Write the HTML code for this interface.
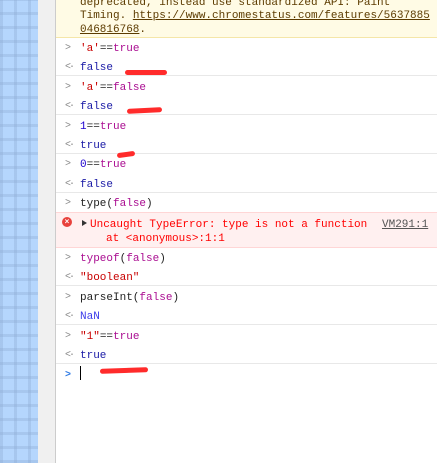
<html><head><style>
body{margin:0;width:437px;height:463px;overflow:hidden;background:#fff;position:relative;font-family:"Liberation Mono",monospace;font-size:11px;color:#222}
.side{position:absolute;left:0;top:0;width:38px;height:463px;background:#b5d6fd;background-image:repeating-linear-gradient(0deg,rgba(140,170,210,.35) 0 3px,transparent 3px 14px),repeating-linear-gradient(90deg,rgba(140,170,210,.35) 0 3px,transparent 3px 14px)}
.gray{position:absolute;left:38px;top:0;width:17px;height:463px;background:#f0f0f0;border-right:1px solid #ccc}
.t{position:absolute;left:80px;white-space:pre;line-height:14px;margin-top:2px}
.p{position:absolute;left:65px;color:#888;font-size:10px;line-height:14px;margin-top:2px;letter-spacing:-2px}
.hr{position:absolute;left:56px;right:0;height:1px;background:#e8e8e8}
.s{color:#c80000}.k{color:#aa0d91}.o{color:#1a1aa6}.n{color:#1c00cf}
.r{position:absolute;background:#ff2b2b;border-radius:3px;height:5px}
</style></head><body>
<div class="side"></div><div class="gray"></div>
<div style="position:absolute;left:56px;top:0;right:0;height:37px;background:#fffbe5;border-bottom:1px solid #f5e6a8"></div>
<div class="t" style="top:-6px;color:#5c3b00">deprecated, instead use standardized API: Paint</div>
<div class="t" style="top:7px;color:#5c3b00">Timing. <u>https://www.chromestatus.com/features/5637885</u></div>
<div class="t" style="top:21px;color:#5c3b00"><u>046816768</u>.</div>

<div class="p" style="top:40px">&gt;</div><div class="t" style="top:40px"><span class="s">'a'</span>==<span class="k">true</span></div>
<div class="p" style="top:59px">&lt;·</div><div class="t o" style="top:59px">false</div>
<div class="hr" style="top:75px"></div>
<div class="p" style="top:79px">&gt;</div><div class="t" style="top:79px"><span class="s">'a'</span>==<span class="k">false</span></div>
<div class="p" style="top:98px">&lt;·</div><div class="t o" style="top:98px">false</div>
<div class="hr" style="top:114px"></div>
<div class="p" style="top:118px">&gt;</div><div class="t" style="top:118px"><span class="n">1</span>==<span class="k">true</span></div>
<div class="p" style="top:137px">&lt;·</div><div class="t o" style="top:137px">true</div>
<div class="hr" style="top:153px"></div>
<div class="p" style="top:156px">&gt;</div><div class="t" style="top:156px"><span class="n">0</span>==<span class="k">true</span></div>
<div class="p" style="top:176px">&lt;·</div><div class="t o" style="top:176px">false</div>
<div class="hr" style="top:192px"></div>
<div class="p" style="top:195px">&gt;</div><div class="t" style="top:195px">type(<span class="k">false</span>)</div>
<div style="position:absolute;left:56px;right:0;top:212px;height:34px;background:#fff0f0;border-top:1px solid #ffd6d6;border-bottom:1px solid #ffd6d6"></div>
<div style="position:absolute;left:62px;top:217px;width:10px;height:10px;border-radius:50%;background:#e8413c;color:#fff;font:bold 8px/10px 'Liberation Sans';text-align:center">×</div>
<div style="position:absolute;left:82px;top:220px;width:0;height:0;border-left:5px solid #333;border-top:3.5px solid transparent;border-bottom:3.5px solid transparent"></div>
<div class="t" style="left:90px;top:216px;color:#f00">Uncaught TypeError: type is not a function</div>
<div class="t" style="left:382px;top:216px;color:#555"><u>VM291:1</u></div>
<div class="t" style="left:106px;top:230px;color:#f00">at &lt;anonymous&gt;:1:1</div>
<div class="p" style="top:250px">&gt;</div><div class="t" style="top:250px"><span class="k">typeof</span>(<span class="k">false</span>)</div>
<div class="p" style="top:269px">&lt;·</div><div class="t s" style="top:269px">"boolean"</div>
<div class="hr" style="top:285px"></div>
<div class="p" style="top:289px">&gt;</div><div class="t" style="top:289px">parseInt(<span class="k">false</span>)</div>
<div class="p" style="top:308px">&lt;·</div><div class="t" style="top:308px;color:#3d3dea">NaN</div>
<div class="hr" style="top:324px"></div>
<div class="p" style="top:328px">&gt;</div><div class="t" style="top:328px"><span class="s">"1"</span>==<span class="k">true</span></div>
<div class="p" style="top:347px">&lt;·</div><div class="t o" style="top:347px">true</div>
<div class="hr" style="top:363px"></div>
<div class="p" style="top:367px;color:#2b78e4;font-weight:bold">&gt;</div>
<div style="position:absolute;left:80px;top:366px;width:1px;height:14px;background:#000"></div>

<div class="r" style="left:125px;top:70px;width:42px"></div>
<div class="r" style="left:127px;top:108px;width:35px;transform:rotate(-3deg)"></div>
<div class="r" style="left:117px;top:152px;width:18px;transform:rotate(-8deg)"></div>
<div class="r" style="left:100px;top:368px;width:48px;transform:rotate(-2deg)"></div>
</body></html>
